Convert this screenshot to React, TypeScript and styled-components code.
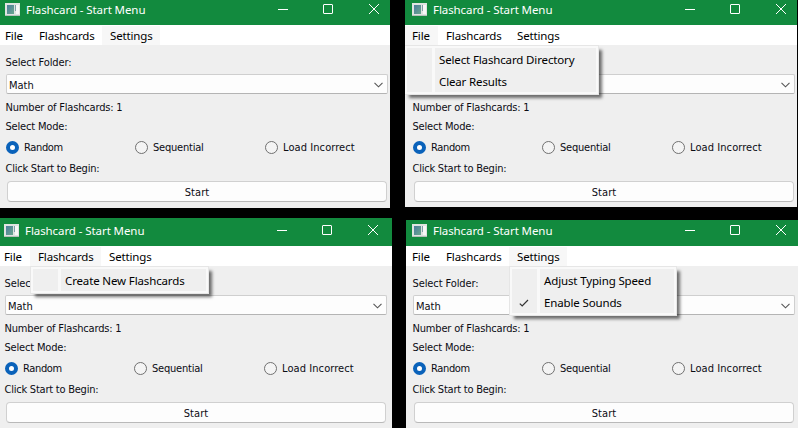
import React from 'react';
import styled, { createGlobalStyle } from 'styled-components';

const Global = createGlobalStyle`
  body { margin: 0; background: #000; overflow: hidden; }
  * { box-sizing: border-box; }
`;

const Desktop = styled.main`
  display: flex;
  width: 798px;
  height: 428px;
  background: #000;
  font-family: 'DejaVu Sans Condensed', 'DejaVu Sans', sans-serif;
  font-size: 11px;
  color: #0c0c14;
`;

const Column = styled.div<{ $width: number; $gap: number }>`
  display: flex;
  flex-direction: column;
  flex: none;
  width: ${p => p.$width}px;
  gap: ${p => p.$gap}px;
`;

const Frame = styled.section<{ $width: number; $height: number; $left: number }>`
  display: flex;
  flex-direction: column;
  flex: none;
  width: ${p => p.$width}px;
  height: ${p => p.$height}px;
  margin-left: ${p => p.$left}px;
  background: #efefef;
  overflow: hidden;
`;

const TitleBar = styled.header<{ $height: number; $shift: number }>`
  display: flex;
  flex: none;
  align-items: flex-end;
  height: ${p => p.$height}px;
  background: #128a3e;
  color: #fff;
  padding-left: ${p => 5 + p.$shift}px;

  > svg { flex: none; }
`;

const AppIcon = styled.svg`
  margin-bottom: 9px;
`;

const Title = styled.h1`
  margin: 0 0 7px 6px;
  width: 252px;
  font: 400 11.5px/16px 'Noto Sans', sans-serif;
  letter-spacing: -0.08px;
  white-space: nowrap;
`;

const Controls = styled.svg`
  margin-bottom: 10px;
`;

const MenuBar = styled.nav<{ $shift: number }>`
  display: flex;
  flex: none;
  height: 20px;
  margin-left: ${p => Math.min(0, p.$shift)}px;
  padding-left: ${p => Math.max(0, p.$shift)}px;
  background: #fff;
  font: 11.5px/18px 'Noto Sans', sans-serif;
  letter-spacing: -0.14px;
  color: #000;
`;

const MenuItem = styled.div<{ $width: number; $pad: number; $active: boolean; $pull: number }>`
  position: relative;
  flex: none;
  width: ${p => p.$width + p.$pull}px;
  margin-left: ${p => -p.$pull}px;
  padding: 1px 0 0 ${p => p.$pad + p.$pull}px;
  background: ${p => (p.$active ? '#f7f7f7' : 'transparent')};
  border-top: 1px solid #fff;
  white-space: nowrap;
`;

const Popup = styled.div<{ $width: number; $left: number }>`
  position: absolute;
  z-index: 2;
  top: 19px;
  left: ${p => p.$left}px;
  display: grid;
  grid-template-columns: 25px 1fr;
  column-gap: 3px;
  width: ${p => p.$width}px;
  padding: 2px;
  border: 1px solid #e6e6e6;
  background: #f9f9f9;
  box-shadow: 4px 4px 3px -1px rgba(0, 0, 0, 0.55);
`;

const Gutter = styled.div`
  display: flex;
  flex-direction: column;
  justify-content: flex-end;
  align-items: center;
  padding: 0 2px 5px 0;
  background: #efefef;
`;

const Entries = styled.div`
  padding: 1px 0 0 4px;
  background: #efefef;
`;

const Entry = styled.div`
  height: 22px;
  line-height: 22px;
  &:last-child { height: 21px; }
`;

const Body = styled.div<{ $shift: number }>`
  display: flex;
  flex-direction: column;
  width: 390px;
  padding: 10px 0 0 6px;
  margin-left: ${p => p.$shift}px;
`;

const Label = styled.div<{ $track: number; $bottom: number }>`
  height: 16px;
  margin-bottom: ${p => p.$bottom}px;
  margin-left: -0.5px;
  line-height: 16px;
  letter-spacing: ${p => p.$track}px;
  white-space: nowrap;
`;

const Combo = styled.div`
  display: flex;
  align-items: center;
  justify-content: space-between;
  width: 382px;
  height: 20px;
  margin-bottom: 6px;
  padding: 2px 4px 0 2px;
  border: 1px solid #cfcfcf;
  border-bottom-color: #b4b4b4;
  border-radius: 2px;
  background: #fdfdfd;
`;

const Radios = styled.div`
  display: grid;
  grid-template-columns: 129px 130px 1fr;
  height: 16px;
  margin-bottom: 6px;
`;

const Radio = styled.div<{ $track: number; $gap: number }>`
  display: flex;
  align-items: center;
  gap: ${p => p.$gap}px;
  line-height: 16px;
  letter-spacing: ${p => p.$track}px;
  white-space: nowrap;
`;

const RadioText = styled.span`
  padding-top: 1px;
`;

const Dot = styled.span<{ $on: boolean }>`
  flex: none;
  width: 13px;
  height: 13px;
  margin-bottom: 1px;
  border: ${p => (p.$on ? '4px solid #0a62ba' : '1px solid #707070')};
  border-radius: 50%;
  background: ${p => (p.$on ? '#fff' : '#f4f4f4')};
`;

const StartButton = styled.button`
  width: 380px;
  height: 21px;
  margin-left: 1px;
  padding: 2px 0 0;
  border: 1px solid #d0d0d0;
  border-bottom-color: #b9b9b9;
  border-radius: 4px;
  background: #fdfdfd;
  color: #0c0c14;
  font: inherit;
  letter-spacing: 0.1px;
  line-height: 17px;
`;

type MenuName = 'File' | 'Flashcards' | 'Settings';

interface Menu {
  name: MenuName;
  width: number;
  pad: number;
  popup: number;
  popupLeft: number;
  entries: string[];
}

const menus: Menu[] = [
  { name: 'File', width: 31, pad: 5, popup: 195, popupLeft: -1, entries: ['Select Flashcard Directory', 'Clear Results'] },
  { name: 'Flashcards', width: 71, pad: 8, popup: 179, popupLeft: 0, entries: ['Create New Flashcards'] },
  { name: 'Settings', width: 58, pad: 8, popup: 168, popupLeft: 0, entries: ['Adjust Typing Speed', 'Enable Sounds'] },
];

interface WindowProps {
  width: number;
  height: number;
  left?: number;
  titleHeight: number;
  shift: number;
  hovered?: MenuName;
  open?: MenuName;
}

function StartMenu({ width, height, left = 0, titleHeight, shift, hovered, open }: WindowProps) {
  return (
    <Frame $width={width} $height={height} $left={left}>
      <TitleBar $height={titleHeight} $shift={shift}>
        <AppIcon width="15" height="13" viewBox="0 0 15 13">
          <defs>
            <linearGradient id="pane" x1="0" y1="0" x2="1" y2="1">
              <stop offset="0" stopColor="#4c7c9c" />
              <stop offset="1" stopColor="#6aa78f" />
            </linearGradient>
          </defs>
          <rect width="15" height="13" fill="#dfe4e1" />
          <rect x="2" y="2" width="7" height="9" fill="url(#pane)" />
          <rect x="10" y="2" width="1" height="6" fill="#7fa0a8" />
          <rect x="11" y="2" width="3" height="9" fill="#f7f7f7" />
          <path d="M0 12.5H15" stroke="#b6c0bc" />
        </AppIcon>
        <Title>Flashcard - Start Menu</Title>
        <Controls width="102" height="12" viewBox="0 0 102 12" fill="none" stroke="#fff">
          <path d="M0 6.5H10" />
          <rect x="45.5" y="1.5" width="9" height="9" rx="0.5" />
          <path d="M91 1L101 11M101 1L91 11" />
        </Controls>
      </TitleBar>
      <MenuBar $shift={shift}>
        {menus.map(m => (
          <MenuItem
            key={m.name}
            $width={m.width}
            $pad={m.pad}
            $active={m.name === hovered || m.name === open}
            $pull={m.name === 'File' && open === 'File' ? shift : 0}
          >
            {m.name}
            {m.name === open && (
              <Popup $width={m.popup} $left={m.popupLeft}>
                <Gutter>
                  {m.name === 'Settings' && (
                    <svg width="10" height="10" viewBox="0 0 10 10" fill="none" stroke="#333">
                      <path d="M0.8 5.6L3.2 8L9 2" strokeWidth="1.2" />
                    </svg>
                  )}
                </Gutter>
                <Entries>
                  {m.entries.map(e => (
                    <Entry key={e}>{e}</Entry>
                  ))}
                </Entries>
              </Popup>
            )}
          </MenuItem>
        ))}
      </MenuBar>
      <Body $shift={shift}>
        <Label $track={-0.1} $bottom={3}>Select Folder:</Label>
        <Combo>
          <span>Math</span>
          <svg width="9" height="6" viewBox="0 0 9 6" fill="none" stroke="#555">
            <path d="M0.5 0.8L4.5 4.8L8.5 0.8" strokeWidth="1.1" />
          </svg>
        </Combo>
        <Label $track={-0.18} $bottom={3}>Number of Flashcards: 1</Label>
        <Label $track={-0.17} $bottom={4}>Select Mode:</Label>
        <Radios>
          <Radio $track={-0.35} $gap={5}><Dot $on /><RadioText>Random</RadioText></Radio>
          <Radio $track={-0.22} $gap={5}><Dot $on={false} /><RadioText>Sequential</RadioText></Radio>
          <Radio $track={0.08} $gap={5}><Dot $on={false} /><RadioText>Load Incorrect</RadioText></Radio>
        </Radios>
        <Label $track={-0.23} $bottom={4}>Click Start to Begin:</Label>
        <StartButton>Start</StartButton>
      </Body>
    </Frame>
  );
}

export default function App() {
  return (
    <>
      <Global />
      <Desktop>
        <Column $width={405} $gap={10}>
          <StartMenu width={390} height={208} titleHeight={25} shift={0} hovered="Settings" />
          <StartMenu width={392} height={210} titleHeight={28} shift={-1} open="Flashcards" />
        </Column>
        <Column $width={393} $gap={13}>
          <StartMenu width={392} height={207} titleHeight={25} shift={2} open="File" />
          <StartMenu width={392} height={208} left={1} titleHeight={26} shift={1} open="Settings" />
        </Column>
      </Desktop>
    </>
  );
}
